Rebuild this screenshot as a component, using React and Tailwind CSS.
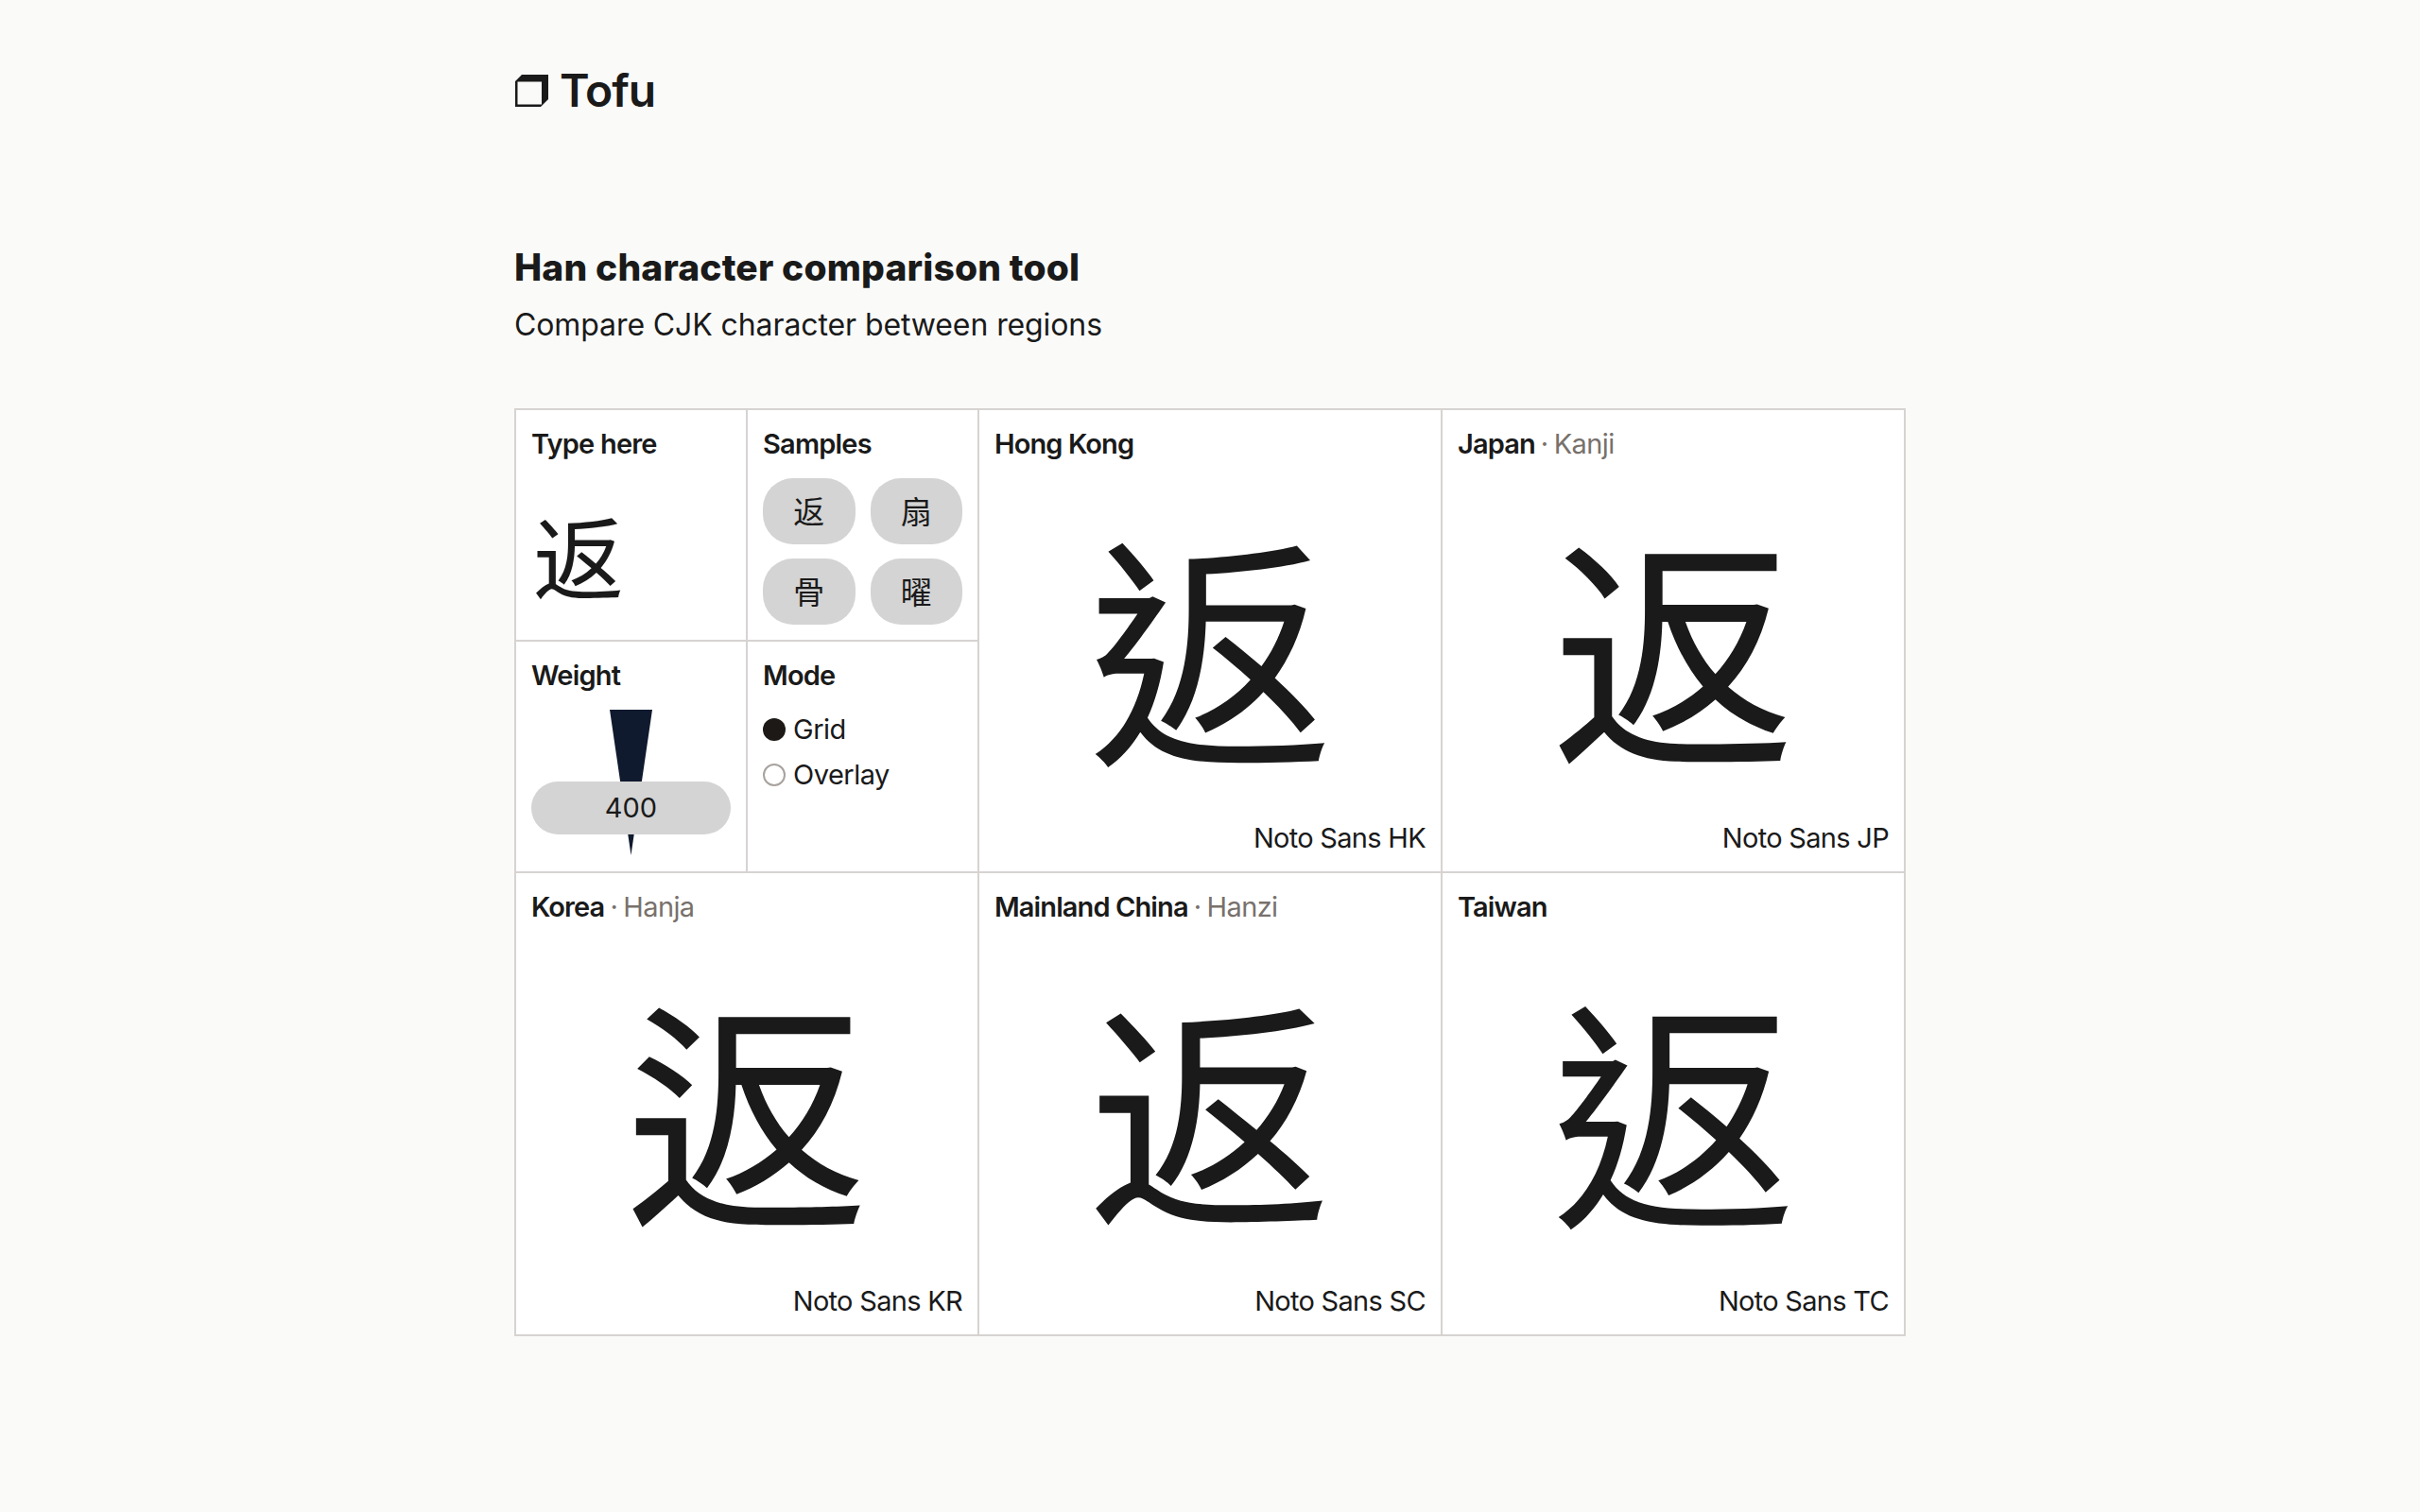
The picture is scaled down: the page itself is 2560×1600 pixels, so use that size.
const regions = [
  { name: "Hong Kong", font: "Noto Sans HK", lang: "zh-HK", family: "font-['Noto_Sans_CJK_HK','Noto_Sans_CJK_TC',sans-serif]" },
  { name: "Japan", sub: "Kanji", font: "Noto Sans JP", lang: "ja", family: "font-['Noto_Sans_CJK_JP',sans-serif]" },
  { name: "Korea", sub: "Hanja", font: "Noto Sans KR", lang: "ko", family: "font-['Noto_Sans_CJK_KR',sans-serif]" },
  { name: "Mainland China", sub: "Hanzi", font: "Noto Sans SC", lang: "zh-CN", family: "font-['Noto_Sans_CJK_SC',sans-serif]" },
  { name: "Taiwan", font: "Noto Sans TC", lang: "zh-TW", family: "font-['Noto_Sans_CJK_TC',sans-serif]" },
];

const samples = ["返", "扇", "骨", "曜"];

function Label({ children }) {
  return <div className="text-[29px] leading-[41px] font-semibold tracking-[-0.8px]">{children}</div>;
}

function RegionCell({ region }) {
  return (
    <div className="flex h-[490px] flex-col border-r-2 border-b-2 border-[#d6d3d1] bg-white px-[16px] pt-[15px] pb-[15px]">
      <div className="text-[29px] leading-[41px]">
        <span className="font-semibold tracking-[-0.9px]">{region.name}</span>
        {region.sub ? <span className="tracking-[-0.6px] text-[#78716c] [word-spacing:-1.5px]"> · {region.sub}</span> : null}
      </div>
      <div lang={region.lang} className={`flex flex-1 items-center justify-center text-[258px] leading-none ${region.family}`}>返</div>
      <div className="text-right text-[29px] leading-[41px] tracking-[-0.7px]">{region.font}</div>
    </div>
  );
}

export default function App() {
  return (
    <div className="min-h-[1600px] bg-[#fafaf9] font-['Inter',sans-serif] text-[#1a1a1a]">
      <div className="mx-auto w-[1472px] pt-[68px]">
        <div className="flex h-[56px] items-center gap-[12px]">
          <svg viewBox="0 0 35 34" className="ml-[1px] h-[34px] w-[35px]" fill="#1a1a1a">
            <path d="M7 0H35V26L27 34H0V7Z M2.5 7.5V31.5H28V7.5Z" fillRule="evenodd" />
          </svg>
          <div className="text-[48px] leading-none font-semibold tracking-[-1px]">Tofu</div>
        </div>
        <h1 className="mt-[131px] text-[39px] leading-[56px] font-extrabold tracking-[0.15px]">Han character comparison tool</h1>
        <p className="mt-[10px] text-[32px] leading-[46px] tracking-[-0.1px]">Compare CJK character between regions</p>

        <div className="mt-[65px] grid grid-cols-[490px_490px_490px] border-t-2 border-l-2 border-[#d6d3d1]">
          <div className="grid grid-cols-2 grid-rows-2">
            <div className="flex flex-col border-r-2 border-b-2 border-[#d6d3d1] bg-white px-[16px] pt-[15px]">
              <Label>Type here</Label>
              <div lang="zh-CN" className="mt-[36px] ml-[2px] font-['Noto_Sans_CJK_SC',sans-serif] text-[96px] leading-[120px]">返</div>
            </div>
            <div className="border-r-2 border-b-2 border-[#d6d3d1] bg-white px-[16px] pt-[15px]">
              <Label>Samples</Label>
              <div className="mt-[16px] grid grid-cols-2 gap-x-[16px] gap-y-[15px]">
                {samples.map((s) => (
                  <div key={s} lang="zh-CN" className="flex h-[70px] items-center justify-center rounded-[32px] bg-[#d4d4d4] font-['Noto_Sans_CJK_SC',sans-serif] text-[33px]">{s}</div>
                ))}
              </div>
            </div>
            <div className="border-r-2 border-b-2 border-[#d6d3d1] bg-white px-[16px] pt-[15px]">
              <Label>Weight</Label>
              <div className="relative mt-[16px] flex h-[154px] justify-center">
                <svg viewBox="0 0 45 154" className="h-[154px] w-[45px]">
                  <polygon points="0,0 45,0 22.5,154" fill="#101a2e" />
                </svg>
                <div className="absolute top-[76px] left-0 flex h-[56px] w-full items-center justify-center rounded-[28px] bg-[#d4d4d4] text-[29px]">400</div>
              </div>
            </div>
            <div className="border-r-2 border-b-2 border-[#d6d3d1] bg-white px-[16px] pt-[15px]">
              <Label>Mode</Label>
              <div className="mt-[16px] flex flex-col gap-[7px] tracking-[-0.5px]">
                <div className="flex h-[41px] items-center gap-[8px] text-[29px]">
                  <span className="h-[24px] w-[24px] rounded-full bg-[#1c1917]" />
                  Grid
                </div>
                <div className="flex h-[41px] items-center gap-[8px] text-[29px]">
                  <span className="h-[24px] w-[24px] rounded-full border-2 border-[#a8a29e] bg-white" />
                  Overlay
                </div>
              </div>
            </div>
          </div>
          {regions.map((r) => <RegionCell key={r.name} region={r} />)}
        </div>
      </div>
    </div>
  );
}
